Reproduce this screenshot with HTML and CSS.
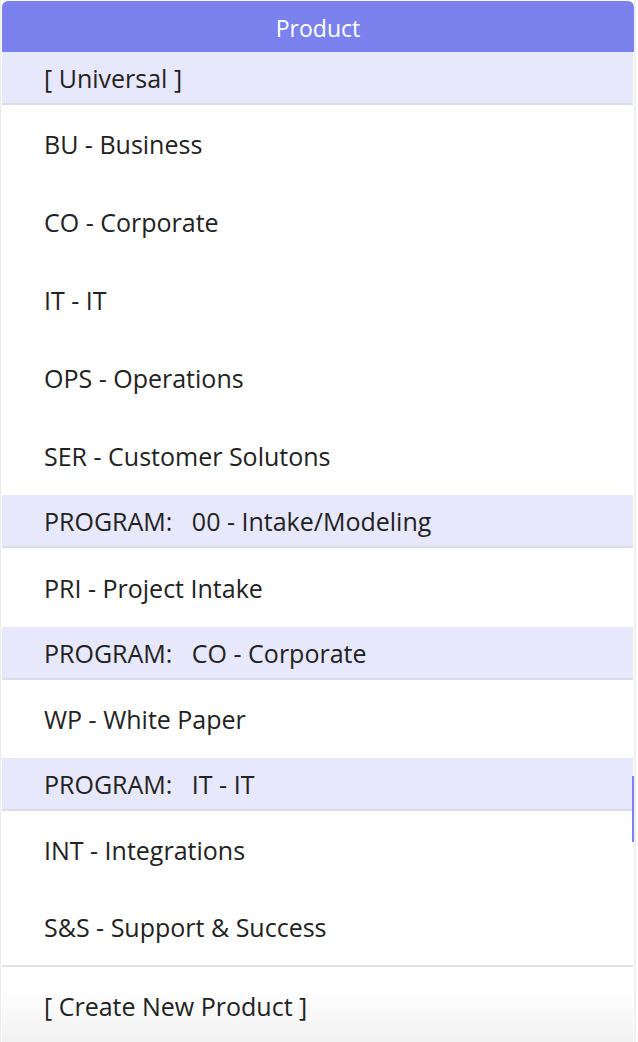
FILE: index.html
```html
<!DOCTYPE html>
<html>
<head>
<meta charset="utf-8">
<link rel="stylesheet" href="styles.css">
</head>
<body>
<div class="panel">
  <div class="header">Product</div>
  <div class="list">
    <div class="group">[ Universal ]</div>
    <div class="item">BU - Business</div>
    <div class="item">CO - Corporate</div>
    <div class="item">IT - IT</div>
    <div class="item">OPS - Operations</div>
    <div class="item">SER - Customer Solutons</div>
    <div class="group">PROGRAM:&nbsp;&nbsp; 00 - Intake/Modeling</div>
    <div class="item item-tall">PRI - Project Intake</div>
    <div class="group">PROGRAM:&nbsp;&nbsp; CO - Corporate</div>
    <div class="item">WP - White Paper</div>
    <div class="group">PROGRAM:&nbsp;&nbsp; IT - IT</div>
    <div class="item item-short">INT - Integrations</div>
    <div class="item item-short">S&amp;S - Support &amp; Success</div>
  </div>
  <div class="footer">[ Create New Product ]</div>
  <div class="thumb"></div>
</div>
</body>
</html>
```
FILE: styles.css
```css
html, body {
  margin: 0;
  padding: 0;
  background: #ffffff;
}
body {
  font-family: "Open Sans", "Noto Sans", sans-serif;
  color: #222222;
}
.panel {
  position: relative;
  width: 636px;
  height: 1042px;
  box-sizing: border-box;
  padding-top: 1px;
  border-left: 1px solid #ececec;
  border-right: 2px solid #f0f0f0;
  display: flex;
  flex-direction: column;
  overflow: hidden;
}
.header {
  height: 51px;
  margin-left: 1px;
  background: #7b82ee;
  border-radius: 6px 6px 0 0;
  color: #ffffff;
  font-size: 23px;
  padding-top: 2px;
  box-sizing: border-box;
  display: flex;
  align-items: center;
  justify-content: center;
  flex-shrink: 0;
}
.list {
  display: flex;
  flex-direction: column;
  margin: 0 1px 0 1px;
}
.group {
  background: #e8e8fd;
  border-bottom: 2px solid #dcdce6;
  box-sizing: border-box;
  height: 53px;
  padding-left: 42px;
  display: flex;
  align-items: center;
  font-size: 25px;
}
.item {
  height: 78px;
  padding-left: 42px;
  display: flex;
  align-items: center;
  font-size: 25px;
}
.item-tall {
  height: 79px;
}
.item-short {
  height: 77px;
}
.footer {
  flex: 1;
  margin: 0 1px;
  border-top: 2px solid #e2e2e2;
  padding-left: 42px;
  padding-top: 2px;
  display: flex;
  align-items: center;
  font-size: 25px;
  background: linear-gradient(#ffffff 30%, #f1f1f1 100%);
}
.thumb {
  position: absolute;
  right: 0;
  top: 776px;
  width: 2px;
  height: 66px;
  background: #7b82ee;
}
```
